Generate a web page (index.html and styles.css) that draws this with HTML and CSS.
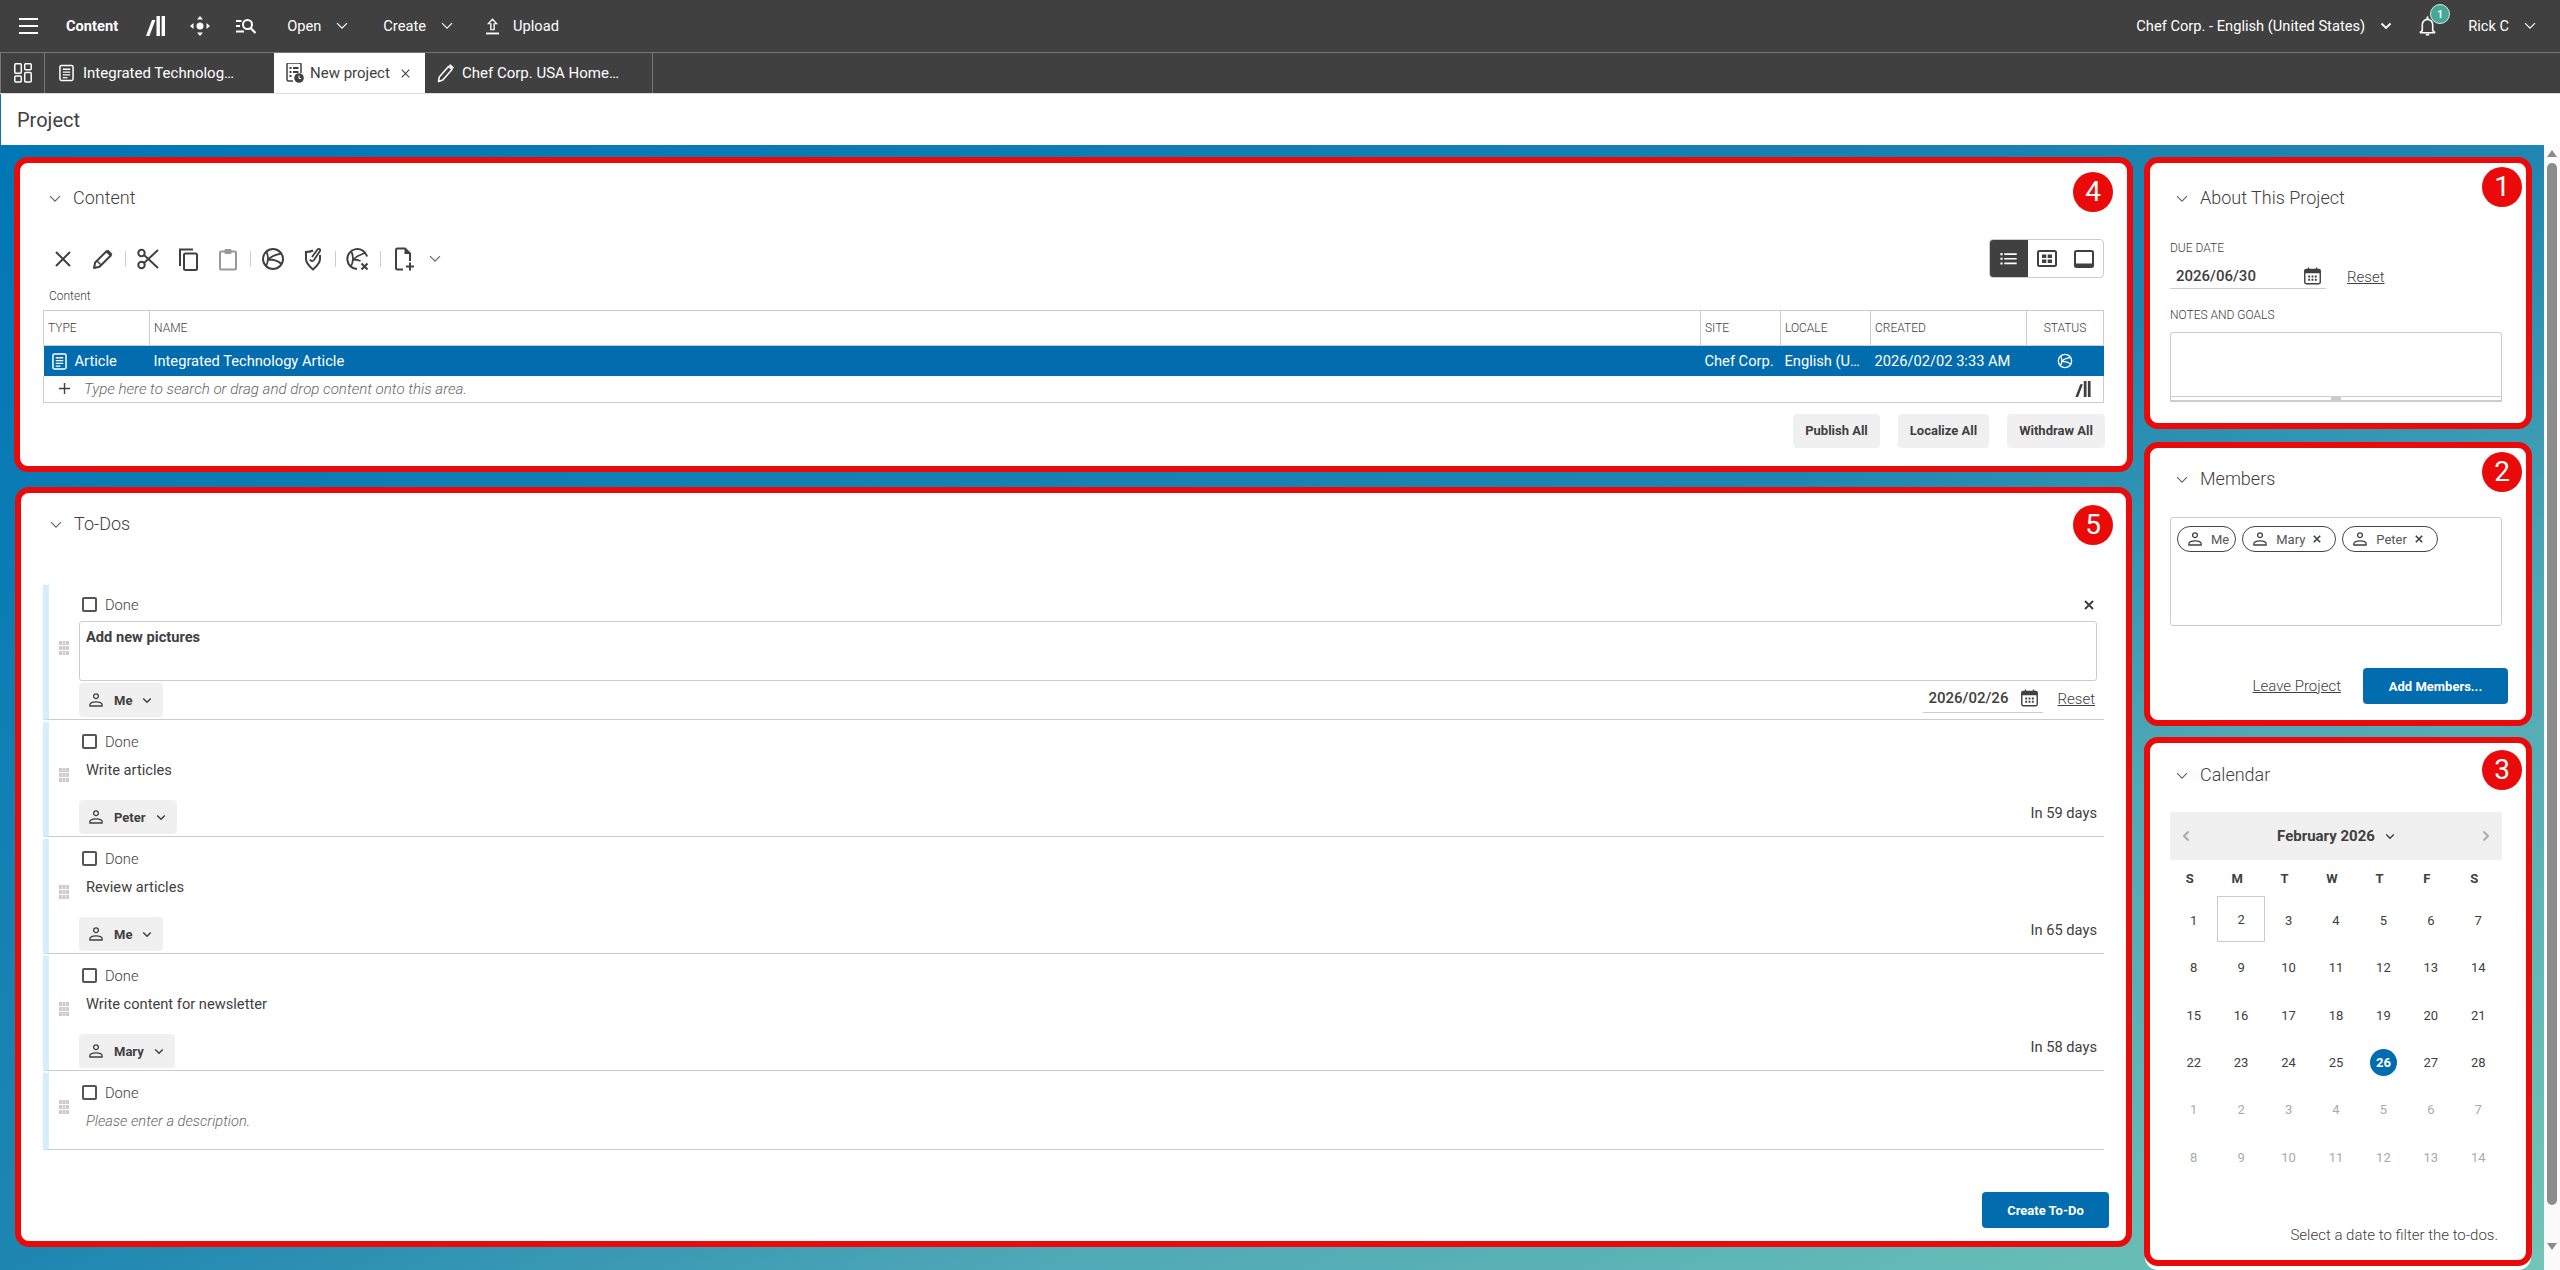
FILE: index.html
```html
<!DOCTYPE html>
<html lang="en">
<head>
<meta charset="utf-8">
<title>Project</title>
<link rel="stylesheet" href="styles.css">
</head>
<body>
<svg class="sprite" xmlns="http://www.w3.org/2000/svg">
  <symbol id="i-chev" viewBox="0 0 12 8"><path d="M1 1.200l5 5 5-5" fill="none" stroke="currentColor" stroke-width="1.200"/></symbol>
  <symbol id="i-chevb" viewBox="0 0 12 8"><path d="M1.500 1.500l4.500 4.500 4.500-4.500" fill="none" stroke="currentColor" stroke-width="1.800"/></symbol>
  <symbol id="i-x" viewBox="0 0 24 24"><path d="M5 5l14 14M19 5L5 19" fill="none" stroke="currentColor" stroke-width="2"/></symbol>
  <symbol id="i-xb" viewBox="0 0 10 10"><path d="M1 1l8 8M9 1L1 9" fill="none" stroke="currentColor" stroke-width="2"/></symbol>
  <symbol id="i-pencil" viewBox="0 0 24 24"><path d="M3 21l1.200-5.500L15.500 4.200l4.300 4.300L8.500 19.800z" fill="none" stroke="currentColor" stroke-width="2" stroke-linejoin="round"/><path d="M17 2.500l4.500 4.500-1.700 1.500-4.300-4.300z" fill="currentColor"/><path d="M6 14l4.300 4.300" stroke="currentColor" stroke-width="1.500"/></symbol>
  <symbol id="i-scissors" viewBox="0 0 24 24"><circle cx="5.500" cy="6" r="3.200" fill="none" stroke="currentColor" stroke-width="2"/><circle cx="5.500" cy="18" r="3.200" fill="none" stroke="currentColor" stroke-width="2"/><path d="M8 8l14 13M8 16L22 3" fill="none" stroke="currentColor" stroke-width="2"/></symbol>
  <symbol id="i-copy" viewBox="0 0 24 24"><path d="M4 19V2.500h13" fill="none" stroke="currentColor" stroke-width="2"/><rect x="8" y="6.500" width="13" height="16.500" rx="1.500" fill="none" stroke="currentColor" stroke-width="2"/></symbol>
  <symbol id="i-paste" viewBox="0 0 24 24"><rect x="4" y="4.500" width="16" height="18" rx="1" fill="none" stroke="currentColor" stroke-width="2"/><rect x="8.500" y="2" width="7" height="5" rx="1" fill="currentColor"/></symbol>
  <symbol id="i-globe" viewBox="0 0 24 24"><circle cx="12" cy="12" r="10" fill="none" stroke="currentColor" stroke-width="2"/><path d="M5.500 5C7.500 9 7.500 15 5 19M20.500 6.500C15 7.500 10 9 7.500 12.500c4.500 0 9.500 1 13 4.500" fill="none" stroke="currentColor" stroke-width="1.800"/></symbol>
  <symbol id="i-approve" viewBox="0 0 24 24"><path d="M12 3.500c-2 1-4 1.500-7 1.500v7c0 4.500 3.500 7.500 7 10.500 3.500-3 7-6 7-10.500V8" fill="none" stroke="currentColor" stroke-width="2"/><path d="M9 12.500c1 2 3 2 4 .5l6-9c1-1.500-1.500-3-2.500-1.500L11 10" fill="none" stroke="currentColor" stroke-width="1.800"/></symbol>
  <symbol id="i-globex" viewBox="0 0 24 24"><path d="M21 9.500A10 10 0 1 0 11 22" fill="none" stroke="currentColor" stroke-width="2"/><path d="M5.500 5C7.500 9 7.500 15 5 19M19 6C15 7.500 10 9 7.500 12.500c2.500 0 5 .5 7 1.500" fill="none" stroke="currentColor" stroke-width="1.800"/><path d="M15.500 16.500l6 6M21.500 16.500l-6 6" stroke="currentColor" stroke-width="2"/></symbol>
  <symbol id="i-newfile" viewBox="0 0 24 24"><path d="M12 22.500H6.500a1.500 1.500 0 0 1-1.500-1.500V3a1.500 1.500 0 0 1 1.500-1.500H14l5 5V14" fill="none" stroke="currentColor" stroke-width="2"/><path d="M13.500 1.500v5.500H19z" fill="currentColor"/><path d="M19 15.500v8M15 19.500h8" stroke="currentColor" stroke-width="2"/></symbol>
  <symbol id="i-list" viewBox="0 0 20 14"><path d="M0 0h2.500v2.500H0zM0 5.500h2.500V8H0zM0 11h2.500v2.500H0zM4.500 .2H19v2H4.500zM4.500 5.700H19v2H4.500zM4.500 11.200H19v2H4.500z" fill="currentColor"/></symbol>
  <symbol id="i-tiles" viewBox="0 0 20 18"><rect x="1" y="1" width="18" height="15" rx="1.500" fill="none" stroke="currentColor" stroke-width="2"/><path d="M5 4.500h4.300v3.500H5zM10.700 4.500H15v3.500h-4.300zM5 9.500h4.300v3.500H5zM10.700 9.500H15v3.500h-4.300z" fill="currentColor"/></symbol>
  <symbol id="i-preview" viewBox="0 0 20 18"><rect x="1" y="1" width="18" height="16" rx="1.500" fill="none" stroke="currentColor" stroke-width="2"/><rect x="1" y="13.500" width="18" height="3.500" fill="currentColor"/></symbol>
  <symbol id="i-article" viewBox="0 0 16 18"><rect x="1" y="1" width="14" height="16" rx="1.500" fill="none" stroke="currentColor" stroke-width="1.600"/><path d="M4 5h8M4 8h8M4 11h8M4 14h5" stroke="currentColor" stroke-width="1.400" fill="none"/></symbol>
  <symbol id="i-project" viewBox="0 0 18 20"><path d="M7 18H2.500A1.500 1.500 0 0 1 1 16.500v-15A1.500 1.500 0 0 1 2.500 0h11A1.500 1.500 0 0 1 15 1.500V10" fill="none" stroke="currentColor" stroke-width="1.500"/><path d="M3.500 4h2v2h-2zM7 4h5.500v2H7zM3.500 8h2v2h-2zM7 8h5.500v2H7zM3.500 12h2v2h-2z" fill="currentColor"/><circle cx="13" cy="15" r="4.800" fill="currentColor"/><path d="M13 12.500V15.500h2" fill="none" stroke="#fff" stroke-width="1"/></symbol>
  <symbol id="i-edit" viewBox="0 0 18 20"><path d="M1.500 18.500l.8-4.500L11.500 3.500l3.500 3L5.800 17z" fill="none" stroke="currentColor" stroke-width="1.500" stroke-linejoin="round"/><path d="M13 1l4 3.500-1.500 1.500-3.500-3z" fill="currentColor"/></symbol>
  <symbol id="i-tabs" viewBox="0 0 18 20"><rect x=".8" y=".8" width="6.500" height="9.500" rx="1" fill="none" stroke="currentColor" stroke-width="1.500"/><rect x="10.700" y=".8" width="6.500" height="6" rx="1" fill="none" stroke="currentColor" stroke-width="1.500"/><rect x=".8" y="13" width="6.500" height="6" rx="1" fill="none" stroke="currentColor" stroke-width="1.500"/><rect x="10.700" y="9.500" width="6.500" height="9.500" rx="1" fill="none" stroke="currentColor" stroke-width="1.500"/></symbol>
  <symbol id="i-logo" viewBox="0 0 19 20"><path d="M0 20L6 4h3.400L3.400 20zM10.500 0h3.400v20h-3.400zM15.600 0H19v20h-3.400z" fill="currentColor"/></symbol>
  <symbol id="i-move" viewBox="0 0 20 20"><circle cx="10" cy="10" r="3.500" fill="currentColor"/><path d="M10 0l3 3.500H7zM10 20l-3-3.500h6zM0 10l3.500-3v6zM20 10l-3.500 3V7z" fill="currentColor"/></symbol>
  <symbol id="i-findlist" viewBox="0 0 20 16"><path d="M0 2h5.500v2H0zM0 7h4v2H0zM0 12.500h8v2H0z" fill="currentColor"/><circle cx="11.500" cy="6.500" r="4.500" fill="none" stroke="currentColor" stroke-width="2"/><path d="M14.500 10l5 5" stroke="currentColor" stroke-width="2.200"/></symbol>
  <symbol id="i-upload" viewBox="0 0 14 18"><path d="M7 0l6 6.500H9.500V13h-5V6.500H1z M7 2.500L3.800 5.500H6V12h2V5.500h2.200z" fill="currentColor" fill-rule="evenodd"/><path d="M0 15.500h14v2H0z" fill="currentColor"/></symbol>
  <symbol id="i-bell" viewBox="0 0 18 20"><path d="M3.500 15V8.500a5.500 5.500 0 0 1 11 0V15l2 1.600v.6H1.500v-.6z" fill="none" stroke="currentColor" stroke-width="1.700" stroke-linejoin="round"/><path d="M7.200 18.300h3.600V20H7.200zM8 0h2v2.500H8z" fill="currentColor"/></symbol>
  <symbol id="i-user" viewBox="0 0 14 14"><circle cx="7" cy="3.200" r="2.400" fill="none" stroke="currentColor" stroke-width="1.300"/><path d="M.8 13v-1c0-2 2.500-3.200 6.200-3.200s6.200 1.200 6.200 3.200v1z" fill="none" stroke="currentColor" stroke-width="1.300" stroke-linejoin="round"/></symbol>
  <symbol id="i-cal" viewBox="0 0 18 18"><rect x=".8" y="2" width="16.400" height="15.200" rx="1.500" fill="none" stroke="currentColor" stroke-width="1.500"/><path d="M1 2.500h16V6H1zM4 0h1.500v3H4zM12.500 0H14v3h-1.500z" fill="currentColor"/><path d="M4.500 8.500h2v2h-2zM8 8.500h2v2H8zM11.500 8.500h2v2h-2zM4.500 12h2v2h-2zM8 12h2v2H8zM11.500 12h2v2h-2z" fill="currentColor"/></symbol>
  <symbol id="i-drag" viewBox="0 0 10 14"><path d="M0 0h3v4H0zM3.500 0h3v4h-3zM7 0h3v4H7zM0 5h3v4H0zM3.500 5h3v4h-3zM7 5h3v4H7zM0 10h3v4H0zM3.500 10h3v4h-3zM7 10h3v4H7z" fill="currentColor"/></symbol>
  <symbol id="i-prev" viewBox="0 0 8 12"><path d="M6.500 1.500L2 6l4.500 4.500" fill="none" stroke="currentColor" stroke-width="2"/></symbol>
  <symbol id="i-next" viewBox="0 0 8 12"><path d="M1.500 1.500L6 6l-4.500 4.500" fill="none" stroke="currentColor" stroke-width="2"/></symbol>
  <symbol id="i-plus" viewBox="0 0 14 14"><path d="M7 1v12M1 7h12" stroke="currentColor" stroke-width="1.500"/></symbol>
</svg>

<div class="app">
  <header class="topbar">
    <span class="burger"><i></i><i></i><i></i></span>
    <strong class="nav-app">Content</strong>
    <svg class="nav-logo"><use href="#i-logo"/></svg>
    <svg class="nav-move"><use href="#i-move"/></svg>
    <svg class="nav-find"><use href="#i-findlist"/></svg>
    <span class="nav-open">Open</span>
    <svg class="nav-chev"><use href="#i-chev"/></svg>
    <span class="nav-create">Create</span>
    <svg class="nav-chev"><use href="#i-chev"/></svg>
    <svg class="nav-upload"><use href="#i-upload"/></svg>
    <span class="nav-uptext">Upload</span>
    <span class="nav-site">Chef Corp. - English (United States)</span>
    <svg class="nav-chev nav-chev-bold"><use href="#i-chevb"/></svg>
    <span class="bell">
      <svg class="bell-icon"><use href="#i-bell"/></svg>
      <b class="bell-count">1</b>
    </span>
    <span class="nav-user">Rick C</span>
    <svg class="nav-chev"><use href="#i-chev"/></svg>
  </header>

  <nav class="tabs">
    <span class="tab-grid"><svg class="tab-grid-icon"><use href="#i-tabs"/></svg></span>
    <span class="tab tab-one"><svg class="tab-icon"><use href="#i-article"/></svg>Integrated Technolog…</span>
    <span class="tab tab-active"><svg class="tab-icon tab-icon-project"><use href="#i-project"/></svg>New project<svg class="tab-close"><use href="#i-x"/></svg></span>
    <span class="tab tab-three"><svg class="tab-icon tab-icon-edit"><use href="#i-edit"/></svg>Chef Corp. USA Home…</span>
  </nav>

  <div class="page-title">Project</div>

  <div class="workspace">
    <main class="canvas">
      <div class="col-left">
        <section class="panel panel-content">
          <span class="badge badge-left">4</span>
          <h2 class="panel-head"><svg class="head-chev"><use href="#i-chev"/></svg>Content</h2>
          <div class="toolbar">
            <div class="tools">
              <span class="tool"><svg class="tool-icon"><use href="#i-x"/></svg></span>
              <span class="tool"><svg class="tool-icon"><use href="#i-pencil"/></svg></span>
              <i class="tool-sep"></i>
              <span class="tool"><svg class="tool-icon"><use href="#i-scissors"/></svg></span>
              <span class="tool"><svg class="tool-icon"><use href="#i-copy"/></svg></span>
              <span class="tool tool-off"><svg class="tool-icon"><use href="#i-paste"/></svg></span>
              <i class="tool-sep"></i>
              <span class="tool"><svg class="tool-icon"><use href="#i-globe"/></svg></span>
              <span class="tool"><svg class="tool-icon"><use href="#i-approve"/></svg></span>
              <i class="tool-sep"></i>
              <span class="tool"><svg class="tool-icon"><use href="#i-globex"/></svg></span>
              <i class="tool-sep"></i>
              <span class="tool"><svg class="tool-icon"><use href="#i-newfile"/></svg></span>
              <svg class="tool-chev"><use href="#i-chev"/></svg>
            </div>
            <div class="views">
              <span class="view view-on"><svg class="view-list"><use href="#i-list"/></svg></span>
              <span class="view"><svg class="view-icon"><use href="#i-tiles"/></svg></span>
              <span class="view"><svg class="view-icon"><use href="#i-preview"/></svg></span>
            </div>
          </div>
          <div class="small-label">Content</div>
          <table class="grid">
            <colgroup>
              <col class="c-type"><col class="c-name"><col class="c-site"><col class="c-locale"><col class="c-created"><col class="c-status">
            </colgroup>
            <thead>
              <tr><th>TYPE</th><th>NAME</th><th>SITE</th><th>LOCALE</th><th>CREATED</th><th class="th-status">STATUS</th></tr>
            </thead>
            <tbody>
              <tr class="row-selected">
                <td class="cell-type"><svg class="row-icon"><use href="#i-article"/></svg>Article</td>
                <td>Integrated Technology Article</td>
                <td>Chef Corp.</td>
                <td>English (U…</td>
                <td>2026/02/02 3:33 AM</td>
                <td class="cell-status"><svg class="row-status"><use href="#i-globe"/></svg></td>
              </tr>
              <tr class="row-add">
                <td colspan="6"><div class="add-line"><svg class="add-plus"><use href="#i-plus"/></svg><em class="add-text">Type here to search or drag and drop content onto this area.</em><svg class="add-logo"><use href="#i-logo"/></svg></div></td>
              </tr>
            </tbody>
          </table>
          <div class="content-actions">
            <button class="btn btn-grey btn-publish">Publish All</button>
            <button class="btn btn-grey btn-localize">Localize All</button>
            <button class="btn btn-grey btn-withdraw">Withdraw All</button>
          </div>
        </section>

        <section class="panel panel-todos">
          <span class="badge badge-left">5</span>
          <h2 class="panel-head"><svg class="head-chev"><use href="#i-chev"/></svg>To-Dos</h2>
          <ul class="todos">
            <li class="todo">
              <svg class="drag"><use href="#i-drag"/></svg>
              <div class="todo-main">
                <div class="todo-check"><i class="box"></i><span>Done</span><svg class="todo-x"><use href="#i-xb"/></svg></div>
                <div class="todo-input">Add new pictures</div>
                <div class="todo-foot todo-foot-tight">
                  <button class="assignee"><svg class="assignee-icon"><use href="#i-user"/></svg>Me<svg class="assignee-chev"><use href="#i-chevb"/></svg></button>
                  <div class="todo-date">
                    <span class="date-field"><span>2026/02/26</span><svg class="date-icon"><use href="#i-cal"/></svg></span>
                    <a class="link link-reset">Reset</a>
                  </div>
                </div>
              </div>
            </li>
            <li class="todo">
              <svg class="drag"><use href="#i-drag"/></svg>
              <div class="todo-main">
                <div class="todo-check"><i class="box"></i><span>Done</span></div>
                <div class="todo-desc">Write articles</div>
                <div class="todo-foot">
                  <button class="assignee"><svg class="assignee-icon"><use href="#i-user"/></svg>Peter<svg class="assignee-chev"><use href="#i-chevb"/></svg></button>
                  <span class="due">In 59 days</span>
                </div>
              </div>
            </li>
            <li class="todo">
              <svg class="drag"><use href="#i-drag"/></svg>
              <div class="todo-main">
                <div class="todo-check"><i class="box"></i><span>Done</span></div>
                <div class="todo-desc">Review articles</div>
                <div class="todo-foot">
                  <button class="assignee"><svg class="assignee-icon"><use href="#i-user"/></svg>Me<svg class="assignee-chev"><use href="#i-chevb"/></svg></button>
                  <span class="due">In 65 days</span>
                </div>
              </div>
            </li>
            <li class="todo">
              <svg class="drag"><use href="#i-drag"/></svg>
              <div class="todo-main">
                <div class="todo-check"><i class="box"></i><span>Done</span></div>
                <div class="todo-desc">Write content for newsletter</div>
                <div class="todo-foot">
                  <button class="assignee"><svg class="assignee-icon"><use href="#i-user"/></svg>Mary<svg class="assignee-chev"><use href="#i-chevb"/></svg></button>
                  <span class="due">In 58 days</span>
                </div>
              </div>
            </li>
            <li class="todo">
              <svg class="drag"><use href="#i-drag"/></svg>
              <div class="todo-main">
                <div class="todo-check"><i class="box"></i><span>Done</span></div>
                <div class="todo-desc todo-empty"><em>Please enter a description.</em></div>
              </div>
            </li>
          </ul>
          <div class="todos-actions"><button class="btn btn-blue btn-create">Create To-Do</button></div>
        </section>
      </div>

      <div class="col-right">
        <section class="panel panel-about">
          <span class="badge">1</span>
          <h2 class="panel-head"><svg class="head-chev"><use href="#i-chev"/></svg>About This Project</h2>
          <div class="side-body">
            <div class="small-label small-label-side">DUE DATE</div>
            <div class="due-row">
              <span class="date-field date-field-wide"><span>2026/06/30</span><svg class="date-icon"><use href="#i-cal"/></svg></span>
              <a class="link link-side">Reset</a>
            </div>
            <div class="small-label small-label-notes">NOTES AND GOALS</div>
            <div class="notes"><span class="notes-handle"><i></i></span></div>
          </div>
        </section>

        <section class="panel panel-members">
          <span class="badge">2</span>
          <h2 class="panel-head"><svg class="head-chev"><use href="#i-chev"/></svg>Members</h2>
          <div class="side-body">
            <div class="member-box">
              <span class="chip"><svg class="chip-user"><use href="#i-user"/></svg>Me</span>
              <span class="chip chip-closable"><svg class="chip-user"><use href="#i-user"/></svg>Mary<svg class="chip-x"><use href="#i-xb"/></svg></span>
              <span class="chip chip-closable"><svg class="chip-user"><use href="#i-user"/></svg>Peter<svg class="chip-x"><use href="#i-xb"/></svg></span>
            </div>
            <div class="member-actions">
              <a class="link">Leave Project</a>
              <button class="btn btn-blue btn-add">Add Members...</button>
            </div>
          </div>
        </section>

        <section class="panel panel-calendar">
          <span class="badge">3</span>
          <h2 class="panel-head"><svg class="head-chev"><use href="#i-chev"/></svg>Calendar</h2>
          <div class="side-body">
            <div class="cal-head">
              <svg class="cal-arrow"><use href="#i-prev"/></svg>
              <span class="cal-month">February 2026<svg class="cal-chev"><use href="#i-chevb"/></svg></span>
              <svg class="cal-arrow"><use href="#i-next"/></svg>
            </div>
            <div class="cal-days">
              <b>S</b><b>M</b><b>T</b><b>W</b><b>T</b><b>F</b><b>S</b>
            </div>
            <div class="cal-grid">
              <span>1</span><span class="cal-today">2</span><span>3</span><span>4</span><span>5</span><span>6</span><span>7</span>
              <span>8</span><span>9</span><span>10</span><span>11</span><span>12</span><span>13</span><span>14</span>
              <span>15</span><span>16</span><span>17</span><span>18</span><span>19</span><span>20</span><span>21</span>
              <span>22</span><span>23</span><span>24</span><span>25</span><span><b class="cal-selected">26</b></span><span>27</span><span>28</span>
              <span class="cal-out">1</span><span class="cal-out">2</span><span class="cal-out">3</span><span class="cal-out">4</span><span class="cal-out">5</span><span class="cal-out">6</span><span class="cal-out">7</span>
              <span class="cal-out">8</span><span class="cal-out">9</span><span class="cal-out">10</span><span class="cal-out">11</span><span class="cal-out">12</span><span class="cal-out">13</span><span class="cal-out">14</span>
            </div>
            <p class="cal-note">Select a date to filter the to-dos.</p>
          </div>
        </section>
      </div>
    </main>
    <aside class="scrollbar">
      <i class="sb-up"></i>
      <i class="sb-thumb"></i>
      <i class="sb-down"></i>
    </aside>
  </div>
</div>
</body>
</html>
```
FILE: styles.css
```css
* { box-sizing: border-box; }
html, body { margin: 0; padding: 0; height: 100%; overflow: hidden; }
body { font-family: Roboto, "Liberation Sans", sans-serif; font-size: 14.667px; color: #404040; background: #fff; }
.sprite { position: absolute; width: 0; height: 0; }
svg { display: block; flex: none; }
ul { list-style: none; margin: 0; padding: 0; }
i, em { display: block; }
em { font-style: italic; }
button { font-family: inherit; border: 0; cursor: pointer; }
.app { width: 2560px; height: 1270px; display: flex; flex-direction: column; }

/* top bar */
.topbar { height: 53px; flex: none; background: #404040; border-bottom: 1px solid #777; color: #fff; display: flex; align-items: center; padding: 0 24px 0 19px; }
.burger { width: 19px; display: flex; flex-direction: column; gap: 5px; }
.burger i { height: 2px; background: #fff; }
.nav-app { margin-left: 28px; font-weight: 700; }
.nav-logo { margin-left: 28px; width: 19px; height: 20px; }
.nav-move { margin-left: 25px; width: 20px; height: 20px; }
.nav-find { margin-left: 26px; width: 20px; height: 16px; }
.nav-open { margin-left: 31px; }
.nav-create { margin-left: 35px; }
.nav-chev { margin-left: 15px; width: 12px; height: 8px; }
.nav-upload { margin-left: 33px; width: 13px; height: 17px; }
.nav-uptext { margin-left: 14px; }
.nav-site { margin-left: auto; }
.bell { position: relative; margin-left: 27px; width: 17px; height: 20px; }
.bell-icon { width: 17px; height: 20px; }
.bell-count { position: absolute; left: 11px; top: -12px; width: 20px; height: 20px; border-radius: 50%; background: #45a798; border: 1px solid #d7ece8; color: #fff; font-size: 10px; font-weight: 700; display: flex; align-items: center; justify-content: center; }
.nav-user { margin-left: 32px; }

/* tabs */
.tabs { height: 41px; flex: none; background: #404040; border-bottom: 1px solid #ddd; display: flex; color: #fff; font-size: 15px; }
.tab-grid { width: 45px; border-left: 1px solid #777; border-right: 1px solid #777; display: flex; align-items: center; justify-content: center; }
.tab-grid-icon { width: 18px; height: 20px; }
.tab { display: flex; align-items: center; white-space: nowrap; }
.tab-one { width: 229px; padding-left: 14px; }
.tab-active { width: 151px; padding-left: 12px; background: #fff; color: #404040; }
.tab-three { width: 228px; padding-left: 12px; border-right: 1px solid #777; }
.tab-icon { width: 15px; height: 18px; margin-right: 9px; }
.tab-icon-project { width: 18px; height: 20px; margin-right: 6px; }
.tab-icon-edit { width: 18px; height: 20px; margin-right: 7px; }
.tab-close { width: 13px; height: 13px; margin-left: 9px; }

.page-title { height: 51px; flex: none; display: flex; align-items: center; padding-left: 16px; font-size: 20px; font-weight: 400; color: #404040; border-left: 1px solid #0077b6; }

/* workspace */
.workspace { flex: 1; display: flex; min-height: 0; }
.canvas { width: 2544px; display: flex; gap: 11px; padding: 12px 0 0 14px; align-items: flex-start;
  background: linear-gradient(to bottom right, #0077b6 0%, #1e86b1 50%, #4ea8b6 70%, #72c5b6 100%); }
.col-left { width: 2119px; display: flex; flex-direction: column; gap: 15px; }
.col-right { width: 388px; display: flex; flex-direction: column; }
.scrollbar { width: 16px; background: #fbfbfb; display: flex; flex-direction: column; align-items: center; padding-top: 5px; }
.sb-up { width: 0; height: 0; border-left: 5px solid transparent; border-right: 5px solid transparent; border-bottom: 7px solid #8c8c8c; }
.sb-thumb { width: 10px; height: 1042px; margin-top: 6px; border-radius: 5px; background: #8c8c8c; }
.sb-down { width: 0; height: 0; margin-top: 38px; border-left: 5px solid transparent; border-right: 5px solid transparent; border-top: 7px solid #8c8c8c; }

/* panels */
.panel { position: relative; border: 6px solid #ea0a0a; border-radius: 14px; background: #fff; }
.panel-content { height: 315px; padding-top: 4px; }
.panel-todos { height: 760px; margin: 0 1px; }
.panel-about { height: 272px; padding-top: 4px; }
.panel-members { height: 284px; margin-top: 13px; }
.panel-calendar { height: 529px; margin-top: 11px; padding-top: 1px; box-shadow: 0 5px 0 -1px #fff; }
.panel-head { height: 62px; margin: 0; padding-bottom: 2px; display: flex; align-items: center; padding-left: 26px; font-size: 18px; font-weight: 300; color: #404040; }
.panel-content .panel-head, .panel-todos .panel-head { padding-left: 29px; }
.head-chev { width: 12px; height: 8px; margin-right: 12px; margin-top: 4px; color: #666; }
.badge { position: absolute; right: 4px; top: 4px; width: 40px; height: 40px; border-radius: 50%; background: #ea0a0a; color: #fff; font-size: 28px; line-height: 40px; text-align: center; }
.panel-content .badge { right: 14px; top: 9px; }
.panel-todos .badge { right: 13px; top: 12px; }
.panel-members .badge { top: 4px; }
.panel-calendar .badge { top: 7px; }

/* content panel */
.toolbar { height: 39px; margin: 10px 23px 0; display: flex; align-items: center; justify-content: space-between; }
.tools { display: flex; align-items: center; }
.tool { width: 40px; display: flex; justify-content: center; }
.tool-icon { width: 24px; height: 24px; }
.tool-off { color: #999; }
.tool-sep { width: 5px; display: flex; justify-content: center; height: 16px; position: relative; }
.tool-sep::after { content: ""; width: 1px; background: #ccc; }
.tool-chev { width: 12px; height: 8px; margin-left: 6px; color: #666; }
.views { width: 115px; height: 39px; border: 1px solid #ccc; border-radius: 4px; display: flex; align-items: stretch; overflow: hidden; }
.view { flex: 1; display: flex; align-items: center; justify-content: center; }
.view-on { background: #404040; color: #fff; }
.view-list { width: 18px; height: 12px; }
.view-icon { width: 20px; height: 18px; }
.small-label { font-size: 12px; line-height: 14px; font-weight: 300; color: #404040; }
.panel-content > .small-label { margin: 11px 23px 7px 29px; }

.grid { width: 2060px; margin-left: 23px; border-collapse: collapse; table-layout: fixed; }
.c-type { width: 106px; } .c-name { width: 1551px; } .c-site { width: 80px; } .c-locale { width: 90px; } .c-created { width: 156px; } .c-status { width: 77px; }
.grid th { height: 35px; padding: 0 4px; text-align: left; font-size: 12px; font-weight: 300; color: #404040; border: 1px solid #ccc; }
.grid th.th-status { text-align: center; }
.row-selected td { height: 30px; padding: 0 5px 0 4px; background: #016cae; color: #fff; white-space: nowrap; overflow: hidden; }
.row-selected td.cell-type { padding-left: 8px; }
.cell-type { display: flex; align-items: center; gap: 8px; }
.row-icon { width: 15px; height: 17px; }
.cell-status .row-status { width: 16px; height: 16px; margin: 0 auto; }
.row-add td { height: 26px; padding: 0; border: 1px solid #ccc; border-top: 0; }
.add-line { display: flex; align-items: center; padding-left: 14px; }
.add-plus { width: 13px; height: 13px; }
.add-text { margin-left: 13px; font-size: 15.1px; font-weight: 300; color: #666; }
.add-logo { margin-left: auto; margin-right: 12px; width: 16px; height: 16px; }
.content-actions { display: flex; justify-content: flex-end; gap: 18px; margin: 11px 22px 0 0; }
.btn { height: 34px; border-radius: 4px; font-size: 13px; font-weight: 700; padding: 0; }
.btn-grey { background: #f0f0f0; color: #404040; }
.btn-blue { height: 36px; background: #016cae; color: #fff; }
.btn-publish { width: 87px; } .btn-localize { width: 91px; } .btn-withdraw { width: 98px; }
.btn-create { width: 127px; }
.btn-add { width: 145px; }

/* to-dos */
.todos { margin: 30px 22px 0; }
.todo { display: flex; align-items: center; margin-bottom: 2px; padding-bottom: 2px; border-left: 6px solid #d4eefc; border-bottom: 1px solid #ccc; }
.drag { width: 10px; height: 14px; margin: 0 10px 6px 10px; color: #ccc; }
.todo-main { flex: 1; padding-right: 7px; min-width: 0; }
.todo-check { height: 36px; padding: 3px 0 0 3px; display: flex; align-items: center; font-weight: 300; color: #404040; }
.box { width: 15px; height: 15px; border: 2px solid #555; border-radius: 2px; margin-right: 8px; }
.todo-x { margin-left: auto; margin-right: 3px; width: 10px; height: 10px; color: #404040; }
.todo-input { height: 60px; border: 1px solid #ccc; border-radius: 3px; padding: 5px 6px 0; line-height: 20px; font-weight: 700; }
.todo-desc { height: 42px; padding-left: 7px; line-height: 24px; }
.todo-empty { height: 38px; font-weight: 300; color: #666; }
.todo-foot { display: flex; justify-content: space-between; align-items: flex-start; }
.todo-foot-tight { margin-top: 2px; }
.assignee { height: 34px; display: flex; align-items: center; background: #f0f0f0; border-radius: 4px; padding: 0 11px 0 10px; font-size: 13px; font-weight: 700; color: #404040; }
.assignee-icon { width: 14px; height: 14px; margin-right: 11px; }
.assignee-chev { width: 10px; height: 7px; margin-left: 10px; }
.due { line-height: 26px; }
.todo-date { display: flex; align-items: flex-start; }
.date-field { display: flex; align-items: center; justify-content: space-between; height: 30px; width: 120px; padding: 0 5px 0 6px; border-bottom: 1px solid #ccc; font-size: 15px; font-weight: 500; }
.date-icon { width: 17px; height: 18px; }
.link { text-decoration: underline; font-size: 15px; font-weight: 300; color: #404040; cursor: pointer; }
.link-reset { margin: 7px 2px 0 15px; }

.todos-actions { position: absolute; right: 17px; bottom: 13px; }

/* side panels */
.side-body { padding: 0 24px 0 20px; }
.small-label-side { padding-top: 12px; }
.due-row { display: flex; align-items: center; margin-top: 9px; }
.date-field-wide { width: 156px; height: 25px; padding-right: 5px; }
.link-side { margin-left: 21px; }
.small-label-notes { margin-top: 19px; }
.notes { position: relative; height: 70px; margin-top: 10px; border: 1px solid #ccc; border-radius: 3px 3px 0 0; }
.notes-handle { position: absolute; left: 0; right: 0; bottom: 0; height: 5px; border-top: 1px solid #ccc; border-bottom: 1px solid #ccc; display: flex; justify-content: center; }
.notes-handle i { width: 20px; height: 3px; background: #fff; position: relative; }
.notes-handle i::after { content: ""; position: absolute; left: 5px; right: 5px; top: 0; height: 3px; background: #ccc; }

.member-box { height: 109px; margin-top: 7px; border: 1px solid #ccc; border-radius: 3px; padding: 8px 6px; display: flex; align-items: flex-start; gap: 6px; }
.chip { height: 26px; display: flex; align-items: center; padding: 0 6px 0 10px; border: 1px solid #444; border-radius: 13px; font-size: 13px; font-weight: 400; color: #555; }
.chip-closable { padding-right: 14px; }
.chip-user { width: 14px; height: 14px; margin-right: 9px; color: #404040; }
.chip-x { width: 8px; height: 8px; margin-left: 8px; color: #404040; }
.member-actions { display: flex; align-items: center; justify-content: flex-end; gap: 22px; margin: 42px -6px 0 0; }

.cal-head { height: 48px; margin-top: 6px; background: #f0f0f0; display: flex; align-items: center; justify-content: space-between; padding: 0 12px; }
.cal-arrow { width: 8px; height: 12px; color: #aaa; }
.cal-month { display: flex; align-items: center; font-size: 15px; font-weight: 700; }
.cal-chev { width: 10px; height: 7px; margin-left: 10px; }
.cal-days { height: 36px; display: grid; grid-template-columns: repeat(7, 1fr); align-items: center; text-align: center; font-size: 13px; }
.cal-days b { padding-right: 8px; }
.cal-grid { display: grid; grid-template-columns: repeat(7, 1fr); grid-auto-rows: 47.3px; font-size: 13px; }
.cal-grid span { display: flex; align-items: center; justify-content: center; padding-top: 2px; }
.cal-grid .cal-today { border: 1px solid #ccc; height: 46px; padding-top: 0; }
.cal-out { color: #aaa; }
.cal-selected { width: 27px; height: 27px; border-radius: 50%; background: #016cae; color: #fff; display: flex; align-items: center; justify-content: center; font-weight: 700; }
.cal-note { margin: 45px 4px 0 0; font-size: 15px; line-height: 20px; text-align: right; font-weight: 300; }
```
